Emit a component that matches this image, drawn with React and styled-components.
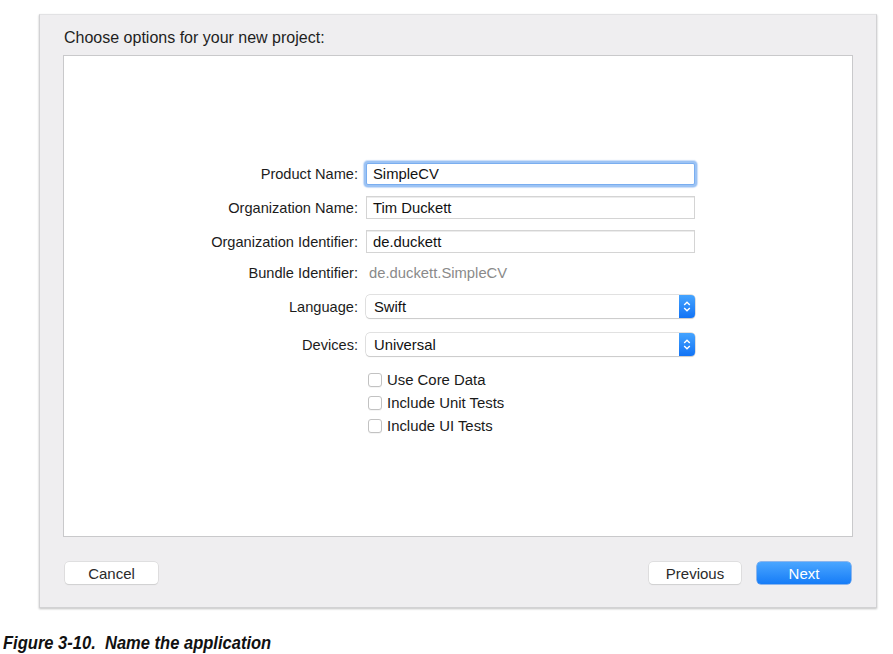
import React from "react";
import styled, { createGlobalStyle } from "styled-components";

const GlobalStyle = createGlobalStyle`
  html, body {
    margin: 0;
    padding: 0;
    background: #ffffff;
    font-family: "Liberation Sans", Arial, sans-serif;
  }
`;

const Page = styled.div`
  width: 893px;
  height: 654px;
  padding-top: 14px;
  box-sizing: border-box;
`;

const Window = styled.div`
  margin-left: 39px;
  width: 838px;
  height: 594px;
  box-sizing: border-box;
  background: #efeef0;
  border: 1px solid #d2d2d4;
  border-top-color: #e2e2e4;
  box-shadow: 0 1px 2px rgba(0, 0, 0, 0.25);
  display: flex;
  flex-direction: column;
`;

const Title = styled.div`
  font-size: 16px;
  color: #1e1e1e;
  padding: 14px 0 0 24px;
  height: 40px;
  box-sizing: border-box;
`;

const Panel = styled.div`
  margin-left: 23px;
  width: 790px;
  height: 482px;
  box-sizing: border-box;
  background: #ffffff;
  border: 1px solid #c9c9cb;
  padding-top: 106px;
  display: flex;
  flex-direction: column;
`;

const Row = styled.div`
  display: flex;
  align-items: center;
  height: ${(p) => p.$h || 23}px;
  margin-top: ${(p) => p.$mt || 0}px;
`;

const Label = styled.div`
  width: 294px;
  text-align: right;
  font-size: 14.6px;
  color: #1c1c1c;
  flex-shrink: 0;
`;

const FieldCol = styled.div`
  margin-left: 8px;
  width: 329px;
  display: flex;
  align-items: center;
`;

const TextField = styled.div`
  width: 100%;
  height: ${(p) => (p.$focused ? 22 : 23)}px;
  box-sizing: border-box;
  border: 1px solid ${(p) => (p.$focused ? "#7aaef0" : "#d4d4d4")};
  box-shadow: ${(p) =>
    p.$focused ? "0 0 0 2px #9cc3f4, 0 0 1px 3px rgba(120,170,240,0.4)" : "inset 0 1px 0 #ececec"};
  border-radius: ${(p) => (p.$focused ? 2 : 0)}px;
  padding-left: 6px;
  display: flex;
  align-items: center;
  font-size: 14.8px;
  color: #111;
  background: #fff;
`;

const Plain = styled.div`
  font-size: 14.8px;
  color: #8a8a8a;
  padding-left: 3px;
`;

const Popup = styled.div`
  width: 100%;
  height: 23px;
  box-sizing: border-box;
  border-radius: 4px;
  background: #fff;
  box-shadow: 0 0 0 0.5px #c4c4c4, 0 1px 1px rgba(0, 0, 0, 0.18);
  display: flex;
  align-items: center;
  font-size: 14.8px;
  color: #111;
  overflow: hidden;
`;

const PopupText = styled.div`
  flex: 1;
  padding-left: 8px;
`;

const Stepper = styled.div`
  width: 16px;
  height: 100%;
  background: linear-gradient(#45a4ff, #1273f5);
  display: flex;
  align-items: center;
  justify-content: center;
`;

const CheckRow = styled.label`
  display: flex;
  align-items: center;
  gap: 5px;
  font-size: 14.9px;
  color: #1a1a1a;
`;

const Box = styled.span`
  width: 14px;
  height: 14px;
  box-sizing: border-box;
  border: 1px solid #c2c2c2;
  border-radius: 3px;
  background: #fff;
  box-shadow: 0 1px 0 rgba(0, 0, 0, 0.04);
  margin-left: 2px;
`;

const Footer = styled.div`
  display: flex;
  align-items: center;
  padding: 25px 25px 0 25px;
  gap: 16px;
`;

const Spacer = styled.div`
  flex: 1;
`;

const Button = styled.div`
  width: ${(p) => p.$w || 93}px;
  height: 22px;
  box-sizing: border-box;
  border-radius: 4px;
  display: flex;
  align-items: center;
  justify-content: center;
  font-size: 15px;
  color: ${(p) => (p.$primary ? "#ffffff" : "#2a2a2a")};
  background: ${(p) =>
    p.$primary ? "linear-gradient(#4aa6ff, #167cf7)" : "#ffffff"};
  box-shadow: ${(p) =>
    p.$primary
      ? "0 0 0 0.5px #2a7de8"
      : "0 0 0 0.5px #cfcfcf, 0 1px 1px rgba(0,0,0,0.12)"};
`;

const Caption = styled.div`
  margin: 24px 0 0 3px;
  font-family: "Liberation Sans", Arial, sans-serif;
  font-weight: bold;
  font-style: italic;
  font-size: 19px;
  color: #111;
  white-space: pre;
  transform: scaleX(0.87);
  transform-origin: left center;
`;

const Chevrons = () => (
  <svg width="8" height="13" viewBox="0 0 8 13">
    <path d="M1.2 5 L4 2.2 L6.8 5" fill="none" stroke="#fff" strokeWidth="1.4" />
    <path d="M1.2 8 L4 10.8 L6.8 8" fill="none" stroke="#fff" strokeWidth="1.4" />
  </svg>
);

const fields = [
  { label: "Product Name:", value: "SimpleCV", focused: true, mt: 0 },
  { label: "Organization Name:", value: "Tim Duckett", mt: 11 },
  { label: "Organization Identifier:", value: "de.duckett", mt: 11 },
];

const checks = ["Use Core Data", "Include Unit Tests", "Include UI Tests"];

export default function App() {
  return (
    <Page>
      <GlobalStyle />
      <Window>
        <Title>Choose options for your new project:</Title>
        <Panel>
          {fields.map((f) => (
            <Row key={f.label} $mt={f.mt}>
              <Label>{f.label}</Label>
              <FieldCol>
                <TextField $focused={f.focused}>{f.value}</TextField>
              </FieldCol>
            </Row>
          ))}
          <Row $mt={8}>
            <Label>Bundle Identifier:</Label>
            <FieldCol>
              <Plain>de.duckett.SimpleCV</Plain>
            </FieldCol>
          </Row>
          <Row $mt={11}>
            <Label>Language:</Label>
            <FieldCol>
              <Popup>
                <PopupText>Swift</PopupText>
                <Stepper>
                  <Chevrons />
                </Stepper>
              </Popup>
            </FieldCol>
          </Row>
          <Row $mt={15}>
            <Label>Devices:</Label>
            <FieldCol>
              <Popup>
                <PopupText>Universal</PopupText>
                <Stepper>
                  <Chevrons />
                </Stepper>
              </Popup>
            </FieldCol>
          </Row>
          {checks.map((c, i) => (
            <Row key={c} $h={21} $mt={i === 0 ? 13 : 2}>
              <Label />
              <FieldCol>
                <CheckRow>
                  <Box />
                  {c}
                </CheckRow>
              </FieldCol>
            </Row>
          ))}
        </Panel>
        <Footer>
          <Button>Cancel</Button>
          <Spacer />
          <Button $w={92}>Previous</Button>
          <Button $primary $w={94}>Next</Button>
        </Footer>
      </Window>
      <Caption>Figure 3-10.  Name the application</Caption>
    </Page>
  );
}
